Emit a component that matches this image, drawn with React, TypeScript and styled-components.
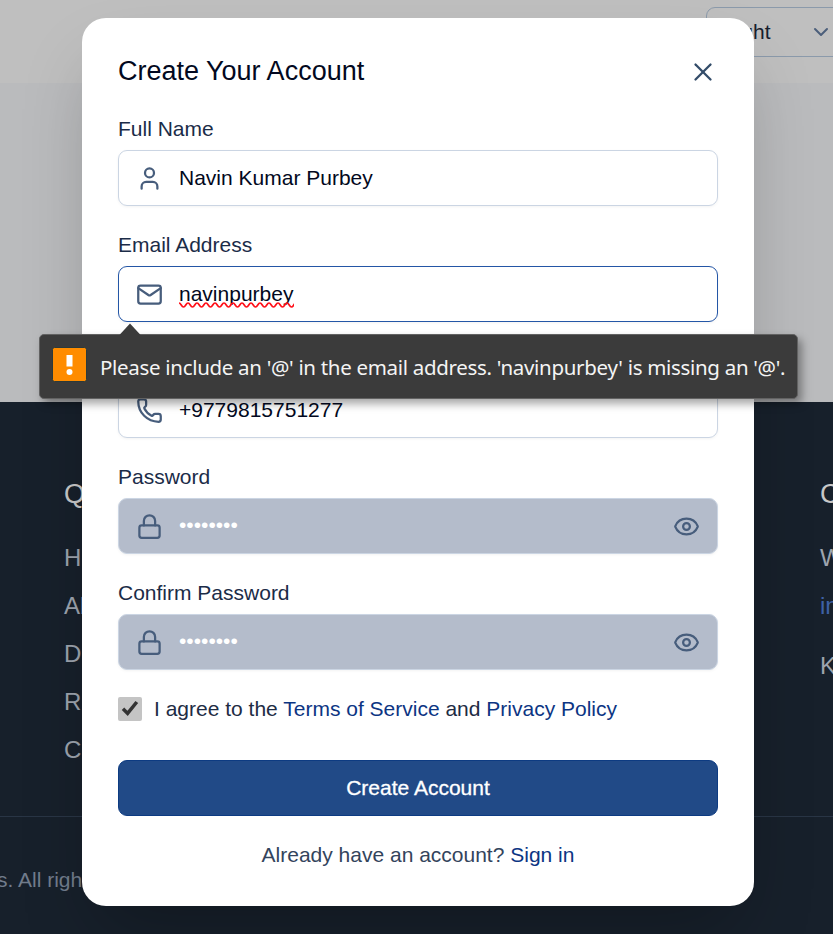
import React from "react";
import styled, { createGlobalStyle, css } from "styled-components";
import { X, User, Phone, Lock, Eye, ChevronDown } from "lucide-react";

const GlobalStyle = createGlobalStyle`
  * { box-sizing: border-box; }
  body { margin: 0; font-family: "Liberation Sans", Arial, sans-serif; }
`;

const Page = styled.div`
  position: relative;
  height: 934px;
  overflow: hidden;
  display: flex;
  flex-direction: column;
`;

const Header = styled.header`
  flex: 0 0 83px;
  display: flex;
  justify-content: flex-end;
  padding-top: 7px;
  background: #bfbfbf;
`;

const Select = styled.div`
  display: flex;
  align-items: center;
  justify-content: space-between;
  width: 142px;
  height: 50px;
  margin-right: -15px;
  padding: 0 14px 0 18px;
  border: 1px solid #8b9aab;
  border-radius: 9px;
  font-size: 21px;
  color: #17202e;
  svg { color: #4c5f7b; }
`;

const Main = styled.main`
  flex: 0 0 319px;
  background: #babbbd;
`;

const Footer = styled.footer`
  flex: 1;
  display: flex;
  flex-direction: column;
  background: #17202b;
  color: #a1a7b0;
`;

const FooterColumns = styled.div`
  display: flex;
  justify-content: space-between;
  height: 415px;
  padding: 74px 0 0 64px;
  border-bottom: 1px solid #293545;
`;

const FooterColumn = styled.div<{ $width: number }>`
  width: ${(p) => p.$width}px;
  white-space: nowrap;
  display: flex;
  flex-direction: column;
`;

const FooterHeading = styled.h3`
  margin: 0 0 22px;
  font-size: 27px;
  line-height: 36px;
  font-weight: 400;
  color: #c8c8c8;
`;

const FooterLink = styled.span<{ $accent?: boolean; $gap?: number }>`
  font-size: 24px;
  line-height: 48px;
  margin-bottom: ${(p) => p.$gap ?? 0}px;
  color: ${(p) => (p.$accent ? "#3e61a6" : "#9da4ae")};
`;

const Copyright = styled.p`
  margin: 48px 0 0 -3px;
  font-size: 21px;
  line-height: 30px;
  color: #717c8c;
`;

const Overlay = styled.div`
  position: absolute;
  inset: 0;
  display: flex;
  justify-content: center;
  align-items: flex-start;
  padding: 18px 0 0 3px;
`;

const Dialog = styled.form`
  width: 672px;
  height: 888px;
  padding: 36px;
  border-radius: 24px;
  background: #fff;
  box-shadow: 0 37px 75px -18px rgba(0, 0, 0, 0.27);
  display: flex;
  flex-direction: column;
`;

const DialogHeader = styled.div`
  display: flex;
  align-items: center;
  justify-content: space-between;
  height: 36px;
  margin-bottom: 24px;
`;

const Title = styled.h2`
  margin: 0;
  padding-bottom: 2px;
  font-size: 27px;
  line-height: 34px;
  font-weight: 400;
  color: #020820;
`;

const CloseButton = styled.button`
  display: flex;
  padding: 0;
  border: 0;
  background: none;
  color: #334c69;
`;

const Fields = styled.div`
  display: flex;
  flex-direction: column;
  gap: 24px;
`;

const Field = styled.div`
  display: flex;
  flex-direction: column;
  gap: 6px;
`;

const Label = styled.label`
  font-size: 21px;
  line-height: 30px;
  color: #1b2c48;
`;

const InputBox = styled.div<{ $state?: "focused" | "filled" }>`
  display: flex;
  align-items: center;
  gap: 16px;
  height: 56px;
  padding: 0 17px;
  border: 1px solid #cbd5e3;
  border-radius: 9px;
  box-shadow: 0 1px 3px rgba(0, 0, 0, 0.05);
  color: #020820;
  > svg { color: #475d7c; flex: none; }
  ${(p) => p.$state === "focused" && css`border-color: #2456a6;`}
  ${(p) => p.$state === "filled" && css`background: #b4bccb; color: #fff;`}
`;

const Value = styled.span`
  position: relative;
  flex: 0 0 auto;
  margin-right: auto;
  font-size: 21px;
  line-height: 30px;
`;

const MaskedValue = styled(Value)`
  padding-bottom: 2px;
`;

const Squiggle = styled.svg`
  position: absolute;
  left: 0;
  top: 22px;
`;

const Consent = styled.div`
  display: flex;
  align-items: center;
  gap: 12px;
  height: 30px;
  margin: 24px 0 36px;
  font-size: 21px;
  color: #1e2c44;
`;

const Checkbox = styled.span`
  display: flex;
  width: 24px;
  height: 24px;
  border-radius: 2px;
  background: #c4c4c4;
`;

const Link = styled.a`
  color: #0c3583;
`;

const Submit = styled.button`
  height: 56px;
  border: 1px solid #0d3b82;
  border-radius: 9px;
  background: #214a87;
  color: #fff;
  font: 400 21px "Liberation Sans", Arial, sans-serif;
  -webkit-text-stroke: 0.3px #fff;
`;

const SignIn = styled.p`
  margin: 24px 0 0;
  text-align: center;
  font-size: 21px;
  line-height: 30px;
  color: #33445c;
`;

const Tooltip = styled.div`
  position: absolute;
  left: 39px;
  top: 334px;
  width: 759px;
  height: 65px;
  display: flex;
  align-items: center;
  gap: 13px;
  padding: 0 0 4px 12px;
  border: 1px solid #626262;
  border-radius: 5px;
  background: #3b3b3b;
  box-shadow: 4px 5px 9px rgba(0, 0, 0, 0.35);
  color: #f4f4f4;
  font: 20.5px/30px "Noto Sans", "Open Sans", sans-serif;
  letter-spacing: -0.31px;
  white-space: nowrap;
`;

const TooltipArrow = styled.svg`
  position: absolute;
  left: 78px;
  top: -12px;
`;

const WarningIcon = styled.svg`
  flex: none;
`;

const TooltipText = styled.span`
  padding-top: 4px;
`;

const footerLinks = ["H", "Ab", "D", "R", "C"];

function MailIcon() {
  return (
    <svg
      width="27"
      height="27"
      viewBox="0 0 24 24"
      fill="none"
      stroke="currentColor"
      strokeWidth="2"
      strokeLinecap="round"
      strokeLinejoin="round"
    >
      <rect x="2" y="4" width="20" height="16" rx="2" />
      <path d="m22 6.3-8.97 6.1a1.94 1.94 0 0 1-2.06 0L2 6.3" />
    </svg>
  );
}

function PasswordField({ label }: { label: string }) {
  return (
    <Field>
      <Label>{label}</Label>
      <InputBox $state="filled">
        <Lock size={27} />
        <MaskedValue>••••••••</MaskedValue>
        <Eye size={27} />
      </InputBox>
    </Field>
  );
}

export default function App() {
  return (
    <Page>
      <GlobalStyle />
      <Header>
        <Select>
          Light
          <ChevronDown size={24} />
        </Select>
      </Header>
      <Main />
      <Footer>
        <FooterColumns>
          <FooterColumn $width={80}>
            <FooterHeading>Q</FooterHeading>
            {footerLinks.map((name) => (
              <FooterLink key={name}>{name}</FooterLink>
            ))}
          </FooterColumn>
          <FooterColumn $width={13}>
            <FooterHeading>C</FooterHeading>
            <FooterLink>W</FooterLink>
            <FooterLink $accent $gap={12}>in</FooterLink>
            <FooterLink>K</FooterLink>
          </FooterColumn>
        </FooterColumns>
        <Copyright>s. All righ</Copyright>
      </Footer>

      <Overlay>
        <Dialog>
          <DialogHeader>
            <Title>Create Your Account</Title>
            <CloseButton type="button" aria-label="Close">
              <X size={30} strokeWidth={1.85} />
            </CloseButton>
          </DialogHeader>
          <Fields>
            <Field>
              <Label>Full Name</Label>
              <InputBox>
                <User size={27} />
                <Value>Navin Kumar Purbey</Value>
              </InputBox>
            </Field>
            <Field>
              <Label>Email Address</Label>
              <InputBox $state="focused">
                <MailIcon />
                <Value>
                  navinpurbey
                  <Squiggle width="115" height="8" fill="none" stroke="#ff0f18" strokeWidth="1.7">
                    <path d={"M0 2" + " q1.1 0 2.25 2 t2.25 2 t2.25 -2 t2.25 -2".repeat(13)} />
                  </Squiggle>
                </Value>
              </InputBox>
            </Field>
            <Field>
              <Label>Phone</Label>
              <InputBox>
                <Phone size={27} />
                <Value>+9779815751277</Value>
              </InputBox>
            </Field>
            <PasswordField label="Password" />
            <PasswordField label="Confirm Password" />
          </Fields>
          <Consent>
            <Checkbox>
              <svg width="24" height="24" viewBox="0 0 24 24" fill="none" stroke="#333" strokeWidth="3.5">
                <path d="M5 11.8 L9.6 16.4 L18.8 5" />
              </svg>
            </Checkbox>
            <span>
              I agree to the <Link>Terms of Service</Link> and <Link>Privacy Policy</Link>
            </span>
          </Consent>
          <Submit type="button">Create Account</Submit>
          <SignIn>
            Already have an account? <Link>Sign in</Link>
          </SignIn>
        </Dialog>
      </Overlay>

      <Tooltip>
        <TooltipArrow width="24" height="13">
          <path d="M0.5 13 L12 0.5 L23.5 13 Z" fill="#3b3b3b" />
        </TooltipArrow>
        <WarningIcon width="35" height="35" viewBox="0 0 35 35">
          <rect x="0.5" y="0.5" width="34" height="34" rx="2" fill="#ff8c00" stroke="#2b3a3a" />
          <rect x="14.5" y="8" width="6" height="11.5" fill="#fff" />
          <circle cx="17.5" cy="25" r="3" fill="#fff" />
        </WarningIcon>
        <TooltipText>
          Please include an '@' in the email address. 'navinpurbey' is missing an '@'.
        </TooltipText>
      </Tooltip>
    </Page>
  );
}
